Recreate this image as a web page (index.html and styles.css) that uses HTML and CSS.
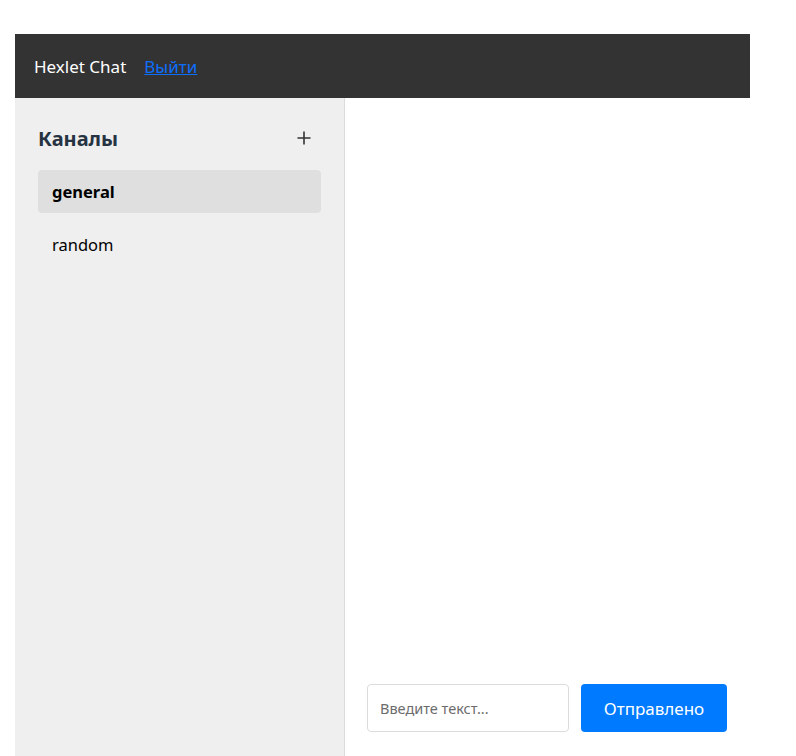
FILE: index.html
```html
<!DOCTYPE html>
<html lang="ru">
<head>
<meta charset="utf-8">
<title>Hexlet Chat</title>
<link rel="stylesheet" href="styles.css">
</head>
<body>
<div class="app">
  <header class="topbar">
    <span class="brand">Hexlet Chat</span>
    <a class="logout" href="#">Выйти</a>
  </header>
  <div class="content">
    <aside class="sidebar">
      <div class="sidebar-head">
        <h2 class="sidebar-title">Каналы</h2>
        <button class="add-btn" type="button" aria-label="Добавить канал">
          <svg width="14" height="14" viewBox="0 0 14 14"><path d="M7 0.5V13.5M0.5 7H13.5" stroke="#333" stroke-width="1.6" fill="none"/></svg>
        </button>
      </div>
      <ul class="channels">
        <li class="channel active">general</li>
        <li class="channel">random</li>
      </ul>
    </aside>
    <main class="chat">
      <div class="messages"></div>
      <form class="composer">
        <input class="msg-input" type="text" placeholder="Введите текст...">
        <button class="send-btn" type="button">Отправлено</button>
      </form>
    </main>
  </div>
</div>
</body>
</html>
```

FILE: styles.css
```css
* { box-sizing: border-box; }
html, body { margin: 0; padding: 0; background: #fff; }
body {
  font-family: "Noto Sans", "Open Sans", sans-serif;
  padding: 34px 0 0 15px;
}
.app {
  width: 735px;
  height: 722px;
  display: flex;
  flex-direction: column;
}
.topbar {
  height: 64px;
  flex: none;
  background: #333333;
  display: flex;
  align-items: center;
  gap: 18px;
  padding: 0 19px;
}
.brand {
  color: #fff;
  font-size: 17px;
}
.logout {
  color: #0d6efd;
  font-size: 17px;
  text-decoration: underline;
}
.content {
  flex: 1;
  display: flex;
  min-height: 0;
}
.sidebar {
  width: 330px;
  flex: none;
  background: #efefef;
  border-right: 1px solid #dcdcdc;
  padding: 22px 23px 0 23px;
}
.sidebar-head {
  display: flex;
  align-items: center;
  justify-content: space-between;
  height: 36px;
  margin-bottom: 14px;
}
.sidebar-title {
  margin: 0;
  font-size: 20px;
  font-weight: 700;
  color: #263342;
}
.add-btn {
  border: 0;
  background: transparent;
  padding: 0;
  margin-right: 10px;
  width: 14px;
  height: 14px;
  display: flex;
}
.channels {
  list-style: none;
  margin: 0;
  padding: 0;
  display: flex;
  flex-direction: column;
  gap: 10px;
}
.channel {
  height: 43px;
  display: flex;
  align-items: center;
  padding: 0 14px;
  font-size: 16.5px;
  color: #000;
  border-radius: 4px;
}
.channel.active {
  background: #dfdfdf;
  font-weight: 700;
}
.chat {
  flex: 1;
  display: flex;
  flex-direction: column;
  padding: 0 23px 24px 22px;
}
.messages { flex: 1; }
.composer {
  display: flex;
  gap: 12px;
}
.msg-input {
  width: 202px;
  height: 48px;
  border: 1px solid #dcdcdc;
  border-radius: 4px;
  padding: 0 12px;
  font-family: inherit;
  font-size: 14.5px;
  color: #333;
  outline: none;
}
.msg-input::placeholder { color: #6c6c6c; }
.send-btn {
  width: 146px;
  height: 48px;
  border: 0;
  border-radius: 4px;
  background: #007bff;
  color: #fff;
  font-family: inherit;
  font-size: 17px;
}
```
